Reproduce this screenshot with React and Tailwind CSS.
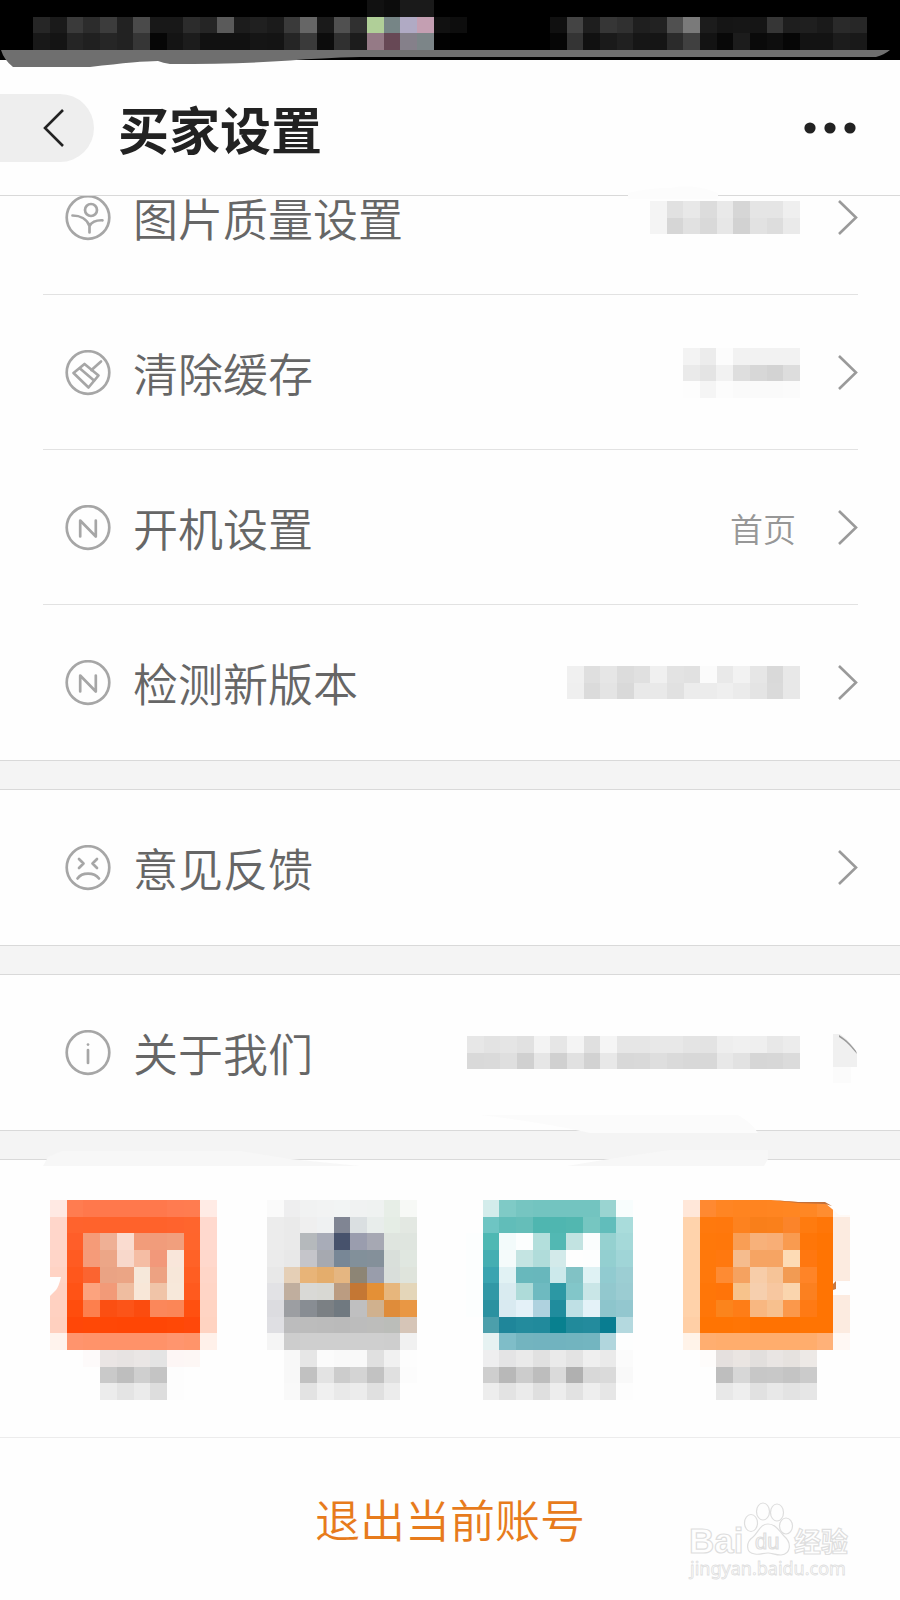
import React from 'react';

const CELL = 50 / 3;

/* Grid of blurred-out blocks; "." leaves a block empty. */
function Mosaic({ rows, className = '' }) {
  const grid = rows.map((row) => row.trim().split(/\s+/));
  const cols = grid[0].length;
  return (
    <svg
      aria-hidden="true"
      width={Math.round(cols * CELL)}
      height={Math.round(grid.length * CELL)}
      viewBox={`0 0 ${cols} ${grid.length}`}
      preserveAspectRatio="none"
      shapeRendering="crispEdges"
      className={`shrink-0 ${className}`}
    >
      {grid.map((row, y) =>
        row.map((c, x) =>
          c === '.' ? null : <rect key={`${x}-${y}`} x={x} y={y} width="1" height="1" fill={`#${c}`} />
        )
      )}
    </svg>
  );
}

const statusLeft = [
  '. . . . . . . . . . . . . . . . . . . . . . 111111 0c0c0c 1a1a1a 1a1a1a . .',
  '. . 262626 1a1a1a 3a3a3a 2c2c2c 3c3c3c 222222 4a4a4a 181818 181818 2c2c2c 252525 5a5a5a 1c1c1c 202020 1b1b1b 3a3a3a 666666 1a1a1a 505050 303030 b0cf98 768586 b0aac4 c49fb2 111111 0d0d0d',
  '. . 181818 141414 252525 202020 262626 222222 363636 060606 141414 1c1c1c 111111 111111 111111 151515 141414 252525 3a3a3a 0c0c0c 303030 1c1c1c 957a86 674855 85808a 7c8588 020202 .',
];

const statusRight = [
  '. . . . . . . . . . . . . . . . . . . . .',
  '101010 444444 1e1e1e 363636 303030 1f1f1f 222222 505050 7a7a7a 1c1c1c 151515 161616 151515 363636 1e1e1e 1f1f1f 1a1a1a 2a2a2a 272727 . .',
  '060606 343434 111111 1a1a1a 202020 161616 151515 2b2b2b 404040 131313 080808 1c1c1c 0a0a0a 0e0e0e 060606 131313 131313 1c1c1c 191919 . .',
];

const qualityValue = [
  'f4f4f4 e1e1e1 e8e8e8 dcdcdc e9e9e9 d6d6d6 e5e5e5 e5e5e5 efefef',
  'f4f4f4 d6d6d6 e1e1e1 d9d9d9 e7e7e7 d2d2d2 e2e2e2 dddddd eaeaea',
];

const cacheValue = [
  'f3f3f3 ececec fcfcfc f2f2f2 f2f2f2 f2f2f2 f2f2f2',
  'eaeaea e4e4e4 f2f2f2 dedede d7d7d7 d3d3d3 dddddd',
  'fdfdfd f5f5f5 fcfcfc fafafa fafafa fafafa fbfbfb',
];

const versionValue = [
  'f0f0f0 dfdfdf e6e6e6 dcdcdc e0e0e0 f0f0f0 e3e3e3 e1e1e1 fbfbfb e9e9e9 f2f2f2 e6e6e6 d9d9d9 e8e8e8',
  'efefef dbdbdb e4e4e4 d9d9d9 e9e9e9 e9e9e9 e1e1e1 ececec ececec efefef ebebeb e4e4e4 dadada e8e8e8',
];

const aboutValue = [
  'e7e7e7 e3e3e3 e5e5e5 e1e1e1 f3f3f3 e6e6e6 f4f4f4 e0e0e0 f5f5f5 e6e6e6 e6e6e6 e8e8e8 e8e8e8 e4e4e4 e3e3e3 eeeeee f0f0f0 efefef e8e8e8 ececec',
  'd9d9d9 dadada dfdfdf d0d0d0 e6e6e6 d0d0d0 e1e1e1 d2d2d2 e8e8e8 d8d8d8 d9d9d9 dedede dadada d8d8d8 d8d8d8 e8e8e8 e2e2e2 d6d6d6 d7d7d7 dbdbdb',
];

const apps = [
  {
    name: '应用一',
    rows: [
      'ffe9e3 ff7c50 ff784c ff784c ff784c ff784c ff784c ff7b50 ff7c50 ffebe5',
      'ffd6ca ff632d ff632c ff622b ff622b ff622b ff622b ff632d ff652d ffd9ce',
      'ffd6ca ff5e29 f59b78 efb095 fadcd0 f29c7a f19c7b f19f7d ff652c ffd9ce',
      'ffd5c8 ff5b22 f59b79 eca687 f8d8cb f5bda4 f2987a f9e6da ff6227 ffd8cc',
      'ffd3c4 ff571c fb6430 eaa384 eba585 f6e8da eda282 f7e7d9 ff5e22 ffd6c8',
      'ffd1c2 ff5316 fca37e f29a78 efbda0 f8e7d8 f0c4a8 f7e8da ff5a1e ffd5c6',
      'ffd1c1 ff4d0d fd7f4d fb4f12 fc5418 fb4c0f fb875a fb8657 ff5010 ffd4c3',
      'ffd0bf ff4708 ff4806 ff4706 ff4605 ff4605 ff4605 ff4806 ff480a ffd3c1',
      'fff3ed ff946d ff936a ff9269 ff9269 ff9269 ff9269 ff956e ff946a fff1ea',
      '. . fdfafa eae5e4 e7e3e2 eae6e5 e4e4e4 fdf6f5 fdf7f5 .',
      '. . . c9c9c9 bebebe cfcfcf c4c4c4 fdfdfd . .',
      '. . . ececec e4e4e4 ebebeb dddddd fdfdfd . .',
    ],
    smear: <path d="M0 77H11Q9 86 6 90L0 96Z" fill="#fefefe" />,
  },
  {
    name: '应用二',
    rows: [
      'fafafa eeeeef f1f2f2 f2f3f3 f2f4f4 f0f2f2 eff2f1 e7eee7 f7f9f6',
      'ececec eaeaea efefef eff1f2 808593 dadfe1 e8edeb e5ede5 e3e8e2',
      'ececec eaeaea b5b9bc a8acb8 47526c 9a9dae a6a8b3 dfe5df dfe5df',
      'ebebeb e8e8e8 c5c5ca a6a9b0 788796 82909a 84909a d9dfda e0e7e0',
      'e8e8e8 e5cfb6 e8b478 e4ad6c e5b681 8d8575 999dab d9deda dfe4dc',
      'e2e2e5 c0ae9e d9d9d6 d8d8d3 bb9c81 c47734 e49036 e7b67c e4d6b9',
      'dcdce0 9c9ea2 888d93 7b8084 707980 bfbfc0 d0b18e df8c3a e99744',
      'dfdfe3 bcbcbd bcbcbc bbbbbb bababa bcbcbc bdbdbb bbbdb9 d6c5b7',
      'f5f5f5 cdcdcd cfcfcf cfcfcf cfcfcf cfcfcf cfcfcf cecece f1f1f1',
      '. f8f8f8 e6e6e6 fbfbfb f9f9f9 f9f9f9 e0e0e0 f1f1f1 fdfdfd',
      '. f8f8f8 c1c1c1 e3e3e3 cccccc d4d4d4 c2c2c2 e0e0e0 fcfcfc',
      '. f9f9f9 e3e3e3 f0f0f0 e9e9e9 ececec e0e0e0 ececec .',
    ],
  },
  {
    name: '应用三',
    rows: [
      '. d3eceb 7fcac6 76c5c1 73c4c0 73c4c0 73c4c0 73c4c0 9ad4d1 f8fdfd',
      '. 6ec5c3 61bdb9 65beb9 4fb6b0 4fb6b0 52b7b0 76c6c1 61bdbb a9dcdb',
      'fcfefe 4eb8b3 f3fbfb fcfefe b3dfdc 52b8b3 c2e3e1 fafdfd 95d1d0 a5d9d9',
      'fcfefe 45aeb2 f5fbfb c4e4e2 b0dcda d3eaea fefefe fdfefe 93cfd0 a0d5d7',
      'fcfefe 3aa4b0 e1f2f4 68b8bc 68b7bc cce9eb 81c2c5 dff2f4 91cbd0 9cced3',
      'fcfefe 3198a6 d9ebf0 aedbd9 6ebac0 2c98a4 82c6c9 c9e6e7 92c8ce 9bccd2',
      'fcfefe 2b91a0 d9eaf1 e4f1f8 afd2df 208c9d bfe0e5 e4f2f8 8dc5cc 93c7cf',
      '. 4c9fab 1f869a 238b9d 218a9c 08808f 218a9b 238b9d 097d91 b4d9df',
      '. e6f2f2 7fbdc8 73b4bf 72b3bf 71b3bf 72b4bf 73b5c0 b1d6dd fdfefe',
      '. eeeeef e4e4e5 eaeaea e1e1e1 eaeaea e3e3e3 efefef eaeaea fbfbfb',
      '. cecece b8b8b8 cccccc bdbdbd dadada b0b0b0 d8d8d8 dadada f9f9f9',
      '. ededed e3e3e3 ebebeb dfdfdf ededed e2e2e2 eeeeee e6e6e6 fdfdfd',
    ],
  },
  {
    name: '应用四',
    rows: [
      'ffe7d9 ff8931 ff8523 ff8420 ff8420 ff8521 ff8622 ff8724 ff8d30 fff9f5',
      'ffd3ac ff790d ff780d fd821f f97f1a fa801b fb842a ff7b0f ff7608 fcebe0',
      'ffd3ac ff780a ff770a f99e55 f7b17a f8ae76 f99b50 ff7608 ff7403 fcebe0',
      'ffd2aa ff780b ff780f f5bc8e f6a463 f6a463 fddbb5 ff7710 ff7403 fcebe0',
      'ffd2aa ff780b fe8b33 f5a260 f7cda9 f6c498 f29b53 ff8427 ff7403 fcebe0',
      'ffd2aa ff7608 ff7409 f7c38c f6cfae f7c7a0 fad5ae fb8020 ff7403 fcebe0',
      'ffd2aa ff7608 fb841c fe7d17 f8b781 f7c08e fb984b ff7a14 ff7403 fcebe0',
      'ffcfa6 ff7403 ff7403 ff7505 ff7202 ff7202 ff7202 ff7403 ff7403 fcebe0',
      'fff3e9 ffae70 ffad6d ffad6d ffad6d ffad6d ffad6d ffad6d ffb178 fff8f4',
      '. fefcfb e5e0de eae5e2 e2dfdd e9e5e3 e6e2df ede9e6 . .',
      '. . bebebe d7d7d7 c7c7c7 c8c8c8 c4c4c4 cbcbcb . .',
      '. . e8e8e8 eeeeee e1e1e1 e8e8e8 e3e3e3 e6e6e6 . .',
    ],
    smear: (
      <>
        <path d="M88 0H167V15H156Q148 8 142 3L115 2Z" fill="#fefefe" />
        <path d="M88 0L115 2L142 2L149 6L142 4L115 3Z" fill="#c2703a" />
        <path d="M150 81H167V95H150Z" fill="#fefefe" />
        <path d="M150 84L153 81V89L150 90Z" fill="#c8783f" />
      </>
    ),
  },
];

function CircleIcon({ children }) {
  return (
    <svg
      aria-hidden="true"
      width="46"
      height="46"
      viewBox="0 0 46 46"
      fill="none"
      stroke="#a6a6a6"
      strokeWidth="2.7"
      strokeLinejoin="round"
      strokeLinecap="round"
      className="shrink-0"
    >
      <circle cx="23" cy="22.500" r="21.300" />
      {children}
    </svg>
  );
}

const PictureIcon = () => (
  <CircleIcon>
    <circle cx="26" cy="15" r="6" />
    <path d="M7.500 20.500C15 20.500 22 24 24.500 31C26.500 27.500 31 25 37.500 25.300M24.500 30V37.500" />
  </CircleIcon>
);

const BrushIcon = () => (
  <CircleIcon>
    <path d="M19.500 14L33.500 25.500L23.500 37.500L8.500 23Z" />
    <path d="M15 18.500L29 30.500M26.500 20L36 11.500" />
  </CircleIcon>
);

const NIcon = () => (
  <CircleIcon>
    <path d="M15.200 31.500V15.500L30.800 31.500V15.500" />
  </CircleIcon>
);

const SadIcon = () => (
  <CircleIcon>
    <path d="M14 14L18.500 18.500L14 23M32 14L27.500 18.500L32 23M12.500 33.500C17 27 29 27 34 33.500" />
  </CircleIcon>
);

const InfoIcon = () => (
  <CircleIcon>
    <path d="M23 20V33" />
    <path d="M23 14.500V14.600" />
  </CircleIcon>
);

function Chevron() {
  return (
    <svg aria-hidden="true" width="20" height="36" viewBox="0 0 20 36" fill="none" stroke="#9a9a9a" strokeWidth="2.600" className="shrink-0">
      <path d="M1 1L18 17.500L1 34" />
    </svg>
  );
}

function SmearedChevron() {
  return (
    <svg aria-hidden="true" width="25" height="40" viewBox="0 0 25 40" className="shrink-0 overflow-visible">
      <path d="M0 1H7C14 6 20 12 24 20V34H0Z" fill="#f0f0f0" />
      <path d="M0 34H18V50H0Z" fill="#fbfbfb" />
      <path d="M6 2L9 4C15 8 20 14 23 18L24 21C19 15 13 8 6 4Z" fill="#999999" />
    </svg>
  );
}

function Row({ icon, label, value, chevron = <Chevron />, divider = false }) {
  return (
    <li>
      <button type="button" className="relative flex h-[155px] w-full items-center pr-[42px] pl-[65px] text-left">
        {icon}
        <span className="ml-[22px] grow text-[45px] leading-[60px] font-[350] text-[#666666]">{label}</span>
        {value}
        <span className="ml-[18px] flex w-[40px] shrink-0 justify-end">{chevron}</span>
        {divider && <span className="absolute right-[42px] bottom-0 left-[43px] h-px bg-[#e2e2e2]" />}
      </button>
    </li>
  );
}

function Gap({ children }) {
  return <div className="relative h-[30px] border-y border-[#d9d9d9] bg-[#f4f4f4]">{children}</div>;
}

function StatusBar() {
  return (
    <div className="relative h-[60px] bg-black">
      <div className="flex justify-between">
        <Mosaic rows={statusLeft} />
        <Mosaic rows={statusRight} />
      </div>
      <svg
        aria-hidden="true"
        viewBox="0 0 900 18"
        preserveAspectRatio="none"
        className="absolute top-[50px] left-0 h-[18px] w-full"
      >
        <path d="M1 0H890Q884 5 876 7H360Q320 8 290 10.500Q240 14 170 14Q163 13 158 11Q140 11 90 17H13Q4 10 1 0Z" fill="#6f6f6f" />
      </svg>
    </div>
  );
}

function Header() {
  return (
    <header className="relative z-10 border-b border-[#d9d9d9] bg-[#fefefe]">
      <StatusBar />
      <div className="flex h-[135px] items-center pr-[44px]">
        <button type="button" aria-label="返回" className="flex h-[68px] w-[94px] items-center justify-end rounded-r-full bg-[#eeeeee] pr-[28px]">
          <svg aria-hidden="true" width="24" height="40" viewBox="0 0 24 40" fill="none" stroke="#222222" strokeWidth="2.600">
            <path d="M21 2L3 20L21 38" />
          </svg>
        </button>
        <h1 className="ml-[24px] grow text-[51px] leading-[68px] font-bold text-[#222222]">买家设置</h1>
        <button type="button" aria-label="更多">
          <svg aria-hidden="true" width="52" height="12" viewBox="0 0 52 12" fill="#222222">
            <circle cx="6" cy="6" r="5.600" />
            <circle cx="26" cy="6" r="5.600" />
            <circle cx="46" cy="6" r="5.600" />
          </svg>
        </button>
      </div>
      <svg aria-hidden="true" width="90" height="14" viewBox="0 0 90 14" className="absolute right-[182px] -bottom-[4px]">
        <path d="M0 8Q20 3 42 3Q60 -1 78 4L90 8V14H0Z" fill="#fcfcfc" />
      </svg>
    </header>
  );
}

function Watermark() {
  return (
    <svg
      aria-label="Baidu 经验 jingyan.baidu.com"
      role="img"
      width="170"
      height="80"
      viewBox="0 0 170 80"
      className="absolute right-[42px] bottom-[18px]"
      fill="#fefefe"
      stroke="#dedede"
      strokeWidth="1.200"
    >
      <text x="1" y="51" fontFamily="Liberation Sans, sans-serif" fontWeight="700" fontSize="35">Bai</text>
      <ellipse cx="63" cy="21" rx="6.500" ry="8.500" />
      <ellipse cx="75" cy="9.500" rx="6.500" ry="8.500" />
      <ellipse cx="89" cy="10.500" rx="6.500" ry="8.500" />
      <ellipse cx="98" cy="24" rx="6.500" ry="8" />
      <path d="M80 22C88 22 91 29 96 34C104 41 103 52 93 53C87 53 84 51 80 51C75 51 72 53 67 52C57 51 58 40 65 35C70 31 72 22 80 22Z" />
      <text x="67" y="47" fontFamily="Liberation Sans, sans-serif" fontSize="22">du</text>
      <text x="106" y="50" fontFamily="Noto Sans CJK SC, sans-serif" fontWeight="700" fontSize="27">经验</text>
      <text x="2" y="73" fontFamily="Noto Sans, sans-serif" fontSize="18" strokeWidth="0.800">jingyan.baidu.com</text>
    </svg>
  );
}

export default function App() {
  return (
    <div className="w-full overflow-hidden bg-[#fefefe] font-['Noto_Sans_CJK_SC',sans-serif]">
      <Header />
      <main>
        <ul className="-mt-[56px]">
          <Row icon={<PictureIcon />} label="图片质量设置" value={<Mosaic rows={qualityValue} />} divider />
          <Row icon={<BrushIcon />} label="清除缓存" value={<Mosaic rows={cacheValue} />} divider />
          <Row
            icon={<NIcon />}
            label="开机设置"
            value={<span className="mr-[4px] text-[33px] leading-[44px] font-[350] text-[#979797]">首页</span>}
            divider
          />
          <Row icon={<NIcon />} label="检测新版本" value={<Mosaic rows={versionValue} />} />
        </ul>
        <Gap />
        <ul>
          <Row icon={<SadIcon />} label="意见反馈" />
        </ul>
        <Gap />
        <ul>
          <Row icon={<InfoIcon />} label="关于我们" value={<Mosaic rows={aboutValue} />} chevron={<SmearedChevron />} />
        </ul>
        <Gap>
          <svg
            aria-hidden="true"
            viewBox="0 0 900 60"
            preserveAspectRatio="none"
            className="absolute -top-[16px] left-0 z-10 h-[60px] w-full"
          >
            <path d="M480 0H738Q752 8 758 18H590Q540 7 480 0Z" fill="#fbfbfb" />
            <path d="M567 51Q620 42 670 35H768V44L764 51Z" fill="#f7f7f7" />
            <path d="M43 51L48 42L62 36H240L290 44L360 51Z" fill="#f7f7f7" />
          </svg>
        </Gap>
        <div className="flex justify-between border-b border-[#ececec] px-[50px] pt-[40px] pb-[37px]">
          {apps.map((app) => (
            <button key={app.name} type="button" aria-label={app.name} className="relative">
              <Mosaic rows={app.rows} />
              {app.smear && (
                <svg aria-hidden="true" width="167" height="200" viewBox="0 0 167 200" className="absolute top-0 left-0">
                  {app.smear}
                </svg>
              )}
            </button>
          ))}
        </div>
      </main>
      <footer className="relative">
        <button type="button" className="flex h-[162px] w-full items-center justify-center text-[45px] leading-[60px] font-[350] text-[#e77b1c]">
          退出当前账号
        </button>
        <Watermark />
      </footer>
    </div>
  );
}
